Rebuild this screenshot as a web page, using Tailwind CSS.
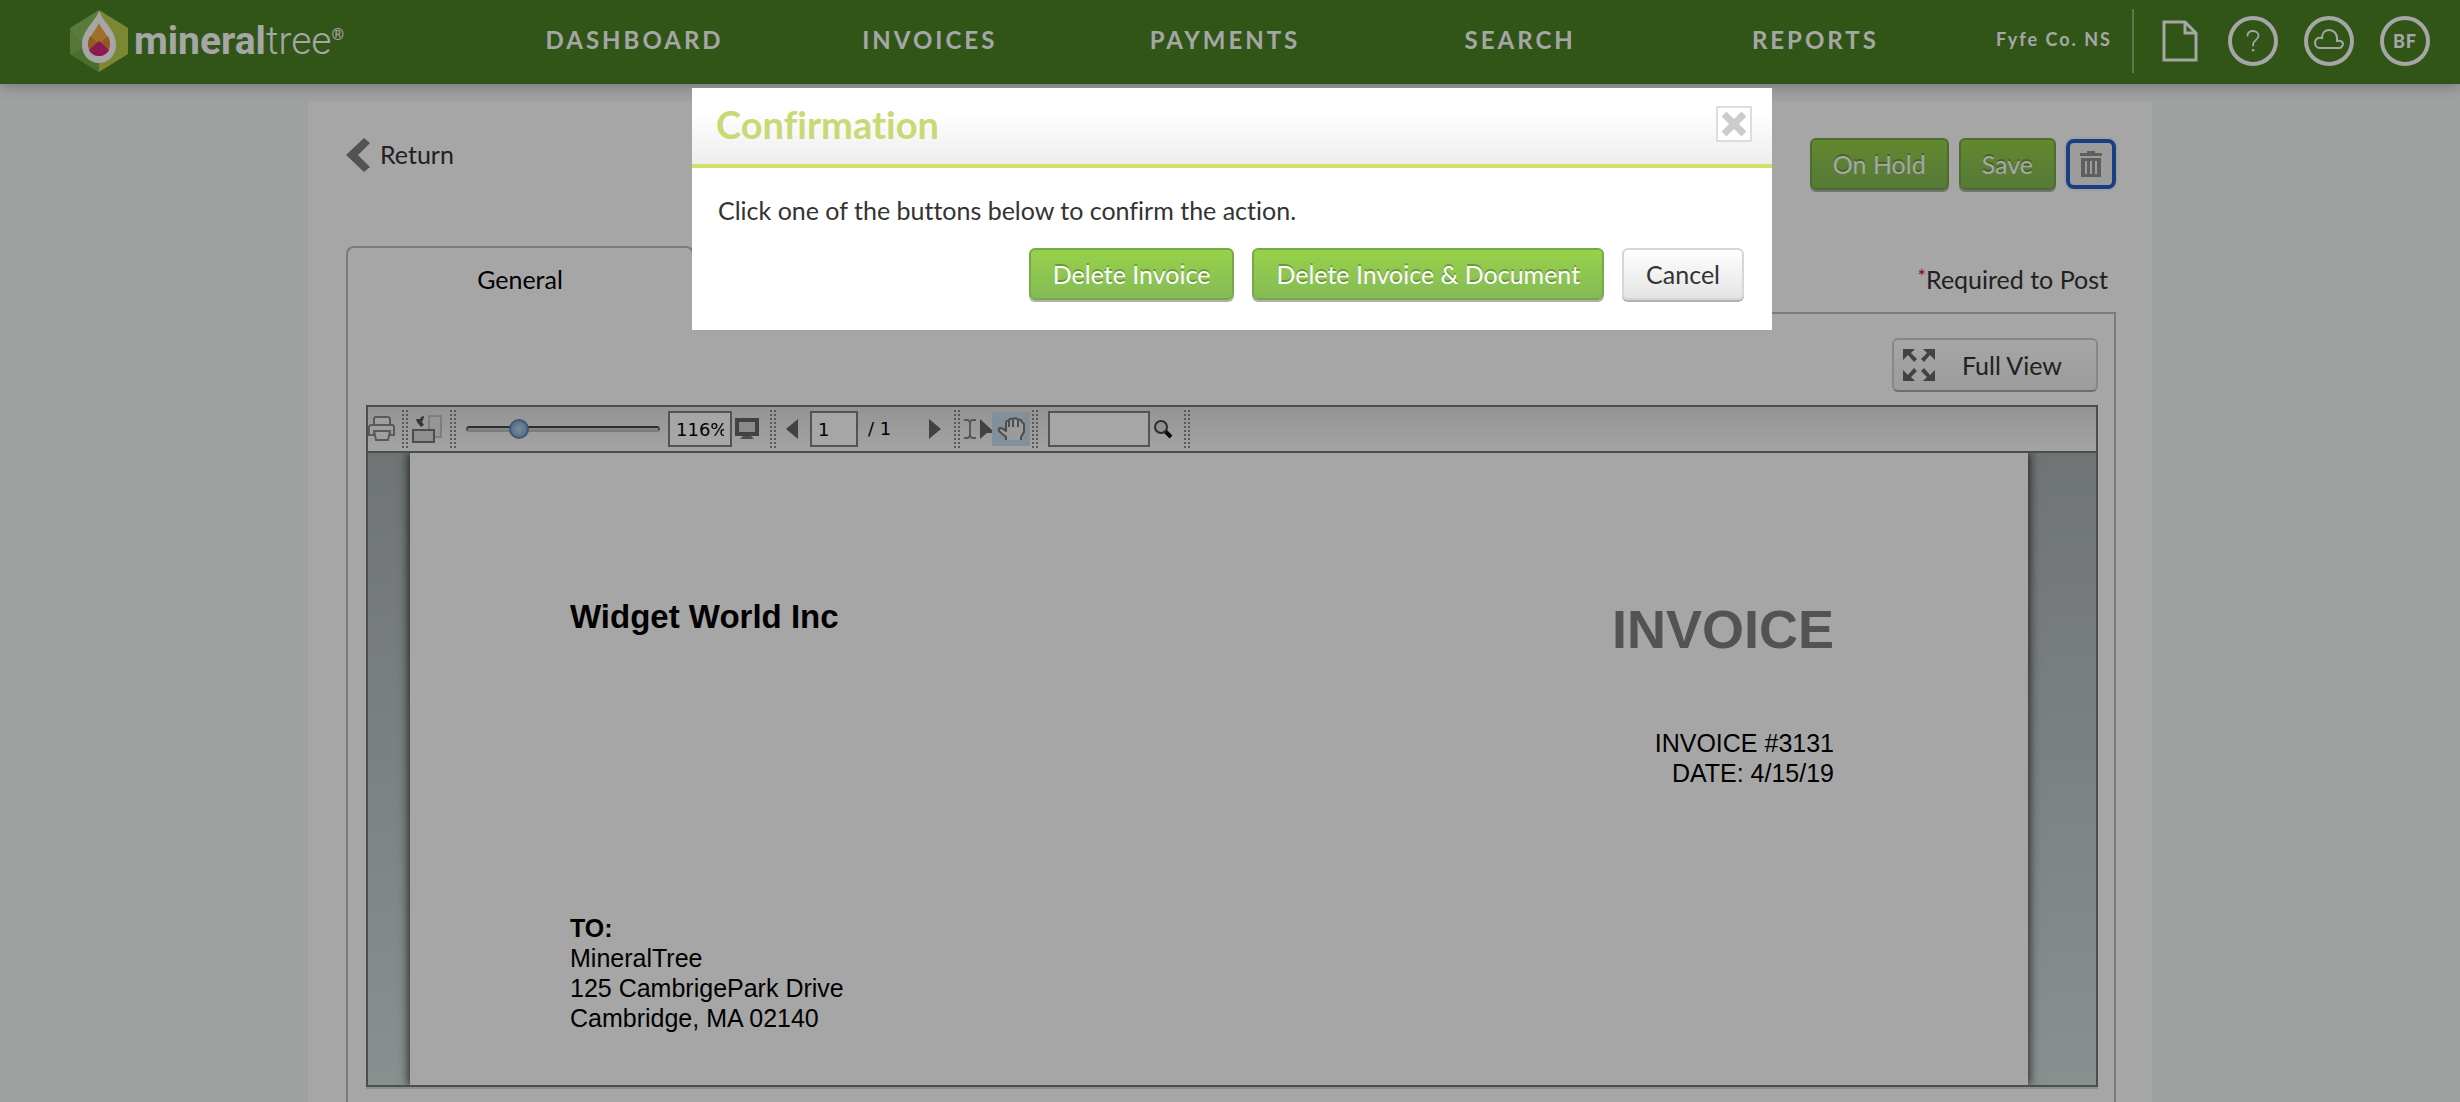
<!DOCTYPE html>
<html lang="en">
<head>
    <meta charset="UTF-8">
    <meta name="viewport" content="width=device-width, initial-scale=1.0">
    <script src="https://cdn.jsdelivr.net/npm/@tailwindcss/browser@4"></script>
    <title>MineralTree - Invoice</title>
</head>
<body class="flex flex-col min-h-screen bg-[#f2f7f5] font-[Lato,sans-serif] text-[25px] leading-8 text-[#333333] [font-variant-ligatures:none]">

<header class="relative z-10 flex items-center h-[84px] shrink-0 pr-[30px] pb-[2px] bg-[#4a8323] text-white shadow-[0_2px_12px_rgba(60,60,90,0.35)]">
    <a href="#" aria-label="mineraltree" class="flex items-center w-[487px] shrink-0 pl-[70px] gap-[6px] font-[Roboto,sans-serif] text-[39px] leading-[62px]">
        <svg class="w-[58px] h-[62px]" viewBox="0 0 58 62">
            <path d="M29 0L0 18v26l29 18z" fill="#8cbd5c"/>
            <path d="M29 0l29 18v26L29 62z" fill="#bfd04f"/>
            <path d="M0 44l29-14v32z" fill="#72aa46"/>
            <path d="M0 18v26l14-8z" fill="#84b656"/>
            <path d="M29 1C25 12 12 20 12 35c0 10 7 18 17 18s17-8 17-18C46 20 33 12 29 1z" fill="#fff"/>
            <path d="M29 13c-3 8-11 13-11 22 0 6 5 11 11 11s11-5 11-11c0-9-8-14-11-22z" fill="#f4ac3c"/>
            <path d="M20 26l9 8-7 7c-2-2-4-4-4-7 0-3 1-6 2-8zM38 26l-9 8 7 7c2-2 4-4 4-7 0-3-1-6-2-8z" fill="#e08a38"/>
            <path d="M29 31L19 40c2 4 6 6 10 6s8-2 10-6z" fill="#d6297f"/>
        </svg>
        <span><b>mineral</b><span class="font-light">tree</span><sup class="text-[16px] -top-[14px]">®</sup></span>
    </a>
    <nav class="grid grid-cols-5 flex-1 text-center text-2xl font-bold tracking-[3px] pb-[2px]">
        <a href="#">DASHBOARD</a>
        <a href="#">INVOICES</a>
        <a href="#">PAYMENTS</a>
        <a href="#">SEARCH</a>
        <a href="#">REPORTS</a>
    </nav>
    <div class="flex items-center justify-end w-[467px] shrink-0">
        <span class="text-[18px] font-bold tracking-[2px] pr-5 pb-1">Fyfe Co. NS</span>
        <span class="w-[2px] h-16 bg-white/40"></span>
        <button aria-label="Documents" class="ml-7 mr-[30px]">
            <svg class="w-[36px] h-[42px]" viewBox="0 0 36 42" fill="none" stroke="#fff" stroke-width="3">
                <path d="M2 2h21l11 11v27H2z"/>
                <path d="M23 2v11h11"/>
            </svg>
        </button>
        <div class="flex gap-[26px]">
            <button aria-label="Help" class="flex items-center justify-center size-[50px] rounded-full border-4">
                <svg class="size-[22px]" viewBox="0 0 24 24" fill="none" stroke="#fff" stroke-width="2" stroke-linecap="round">
                    <path d="M6 6c0-7 12-6 12 0 0 5-6 5-6 10v1"/>
                    <circle cx="12" cy="22" r="1" fill="#fff" stroke-width="1"/>
                </svg>
            </button>
            <button aria-label="Cloud" class="flex items-center justify-center size-[50px] rounded-full border-4">
                <svg class="w-[30px] h-[26px] mb-1" viewBox="0 0 30 26" fill="none" stroke="#fff" stroke-width="2">
                    <path d="M6 22a5 5 0 0 1-5-5c0-4 3-6 7-5 0-5 3-8 7-8 5 0 8 4 8 8v3c4-1 6 1 6 3s-2 4-4 4z"/>
                </svg>
            </button>
            <button class="size-[50px] rounded-full border-4 text-[18px] leading-none font-black tracking-[1px]">BF</button>
        </div>
    </div>
</header>

<main class="flex flex-col flex-1 w-full max-w-[1844px] mx-auto mt-[18px] pl-[38px] pr-9 bg-white">
    <div class="flex justify-between items-start pt-9">
        <a href="#" class="flex items-center gap-[10px]">
            <svg class="w-[24px] h-[34px]" viewBox="0 0 24 34"><path d="M18 0l6 5-12 12 12 12-6 5L0 17z" fill="#808080"/></svg>
            <span class="pb-[2px]">Return</span>
        </a>
        <div class="flex items-center gap-[10px]">
            <button class="h-[52px] px-[21px] rounded-md border-2 border-[#77a84a] bg-linear-to-b from-[#98d148] to-[#84bb56] text-white text-shadow-[0_-2px_0_rgba(0,0,0,0.25)] shadow-[0_2px_0_#b0b0b0]">On Hold</button>
            <button class="h-[52px] px-[21px] rounded-md border-2 border-[#77a84a] bg-linear-to-b from-[#98d148] to-[#84bb56] text-white text-shadow-[0_-2px_0_rgba(0,0,0,0.25)] shadow-[0_2px_0_#b0b0b0]">Save</button>
            <button aria-label="Delete" class="flex items-center justify-center size-[50px] rounded-lg border-4 border-[#2263c8] bg-[#f0f0f0] shadow-[0_0_0_2px_#f4f4f4]">
                <svg class="w-[24px] h-[26px]" viewBox="0 0 24 26" fill="#939393">
                    <path d="M8 0h8v2h7v3H1V2h7z"/>
                    <path d="M2 7h20v19H2zM6 10v13h2V10zM11 10v13h2V10zM16 10v13h2V10z" fill-rule="evenodd"/>
                </svg>
            </button>
        </div>
    </div>

    <div class="flex justify-between mt-14">
        <button class="w-[348px] h-[68px] -mb-[2px] pb-1 relative rounded-t-lg border-2 border-b-0 border-[#bdbdbd] bg-white text-black">General</button>
        <span class="flex self-center pr-2"><span class="text-xl leading-6 text-red-600">*</span>Required to Post</span>
    </div>

    <section class="flex-1 border-2 border-b-0 border-[#bdbdbd] pl-[18px] pr-4 pt-6">
        <div class="flex justify-end">
            <button class="flex items-center gap-[26px] h-[54px] pl-2 pr-[34px] rounded-md border-2 border-[#d0d0d0] border-b-[#aaaaaa] bg-linear-to-b from-white to-[#f0f0f0]">
                <svg class="w-[34px] h-[34px]" viewBox="0 0 34 34" fill="#666">
                    <path d="M1 1h12L9 5l6 6-3 3-6-7-5 5zM33 1H21l4 4-6 6 3 3 6-7 5 5zM1 33h12l-4-4 6-6-3-3-6 7-5-5zM33 33H21l4-4-6-6 3-3 6 7 5-5z"/>
                </svg>
                Full View
            </button>
        </div>

        <div class="mt-[13px] border-2 border-[#777777] shadow-[0_2px_0_#d3dddd]">
            <!-- viewer toolbar -->
            <div class="flex items-center h-[46px] border-b-2 border-[#777777] bg-linear-to-b from-[#e3e3e3] to-[#fcfcfc] font-['DejaVu_Sans',sans-serif] text-[18px] text-black">
                <button aria-label="Print">
                    <svg class="w-[28px] h-[26px]" viewBox="0 0 28 26" fill="#f4f4f4" stroke="#8a8a8a" stroke-width="2">
                        <path d="M6 9V3q0-2 2-2h11q3 0 3 2v6"/>
                        <path d="M4 9h20q2 0 2 2v8h-4v-4H6v4H1v-8q0-2 3-2z"/>
                        <path d="M6 15h16l-2 9H8z"/>
                    </svg>
                </button>
                <span class="w-[6px] h-[38px] ml-[6px] border-x-2 border-dotted border-[#8a8a8a]"></span>
                <button aria-label="Rotate" class="ml-1">
                    <svg class="w-[30px] h-[30px]" viewBox="0 0 30 30">
                        <path d="M17 2h12v21H17z" fill="#e6e6e6" stroke="#c2c2c2" stroke-width="2"/>
                        <path d="M1 16h21v12H1z" fill="#dcdcdc" stroke="#777" stroke-width="2"/>
                        <path d="M12 2q-3 0-4 3H4l1 3 4 5 3-2-2-3q2-3 2-6z" fill="#555"/>
                    </svg>
                </button>
                <span class="w-[6px] h-[38px] ml-2 border-x-2 border-dotted border-[#8a8a8a]"></span>
                <input type="range" aria-label="Zoom" min="0" max="100" value="24" class="w-[194px] h-[6px] ml-[10px] appearance-none rounded-full border-2 border-t-[#444444] border-x-[#777777] border-b-[#b5c2bd] bg-[#cccccc] [&::-webkit-slider-thumb]:appearance-none [&::-webkit-slider-thumb]:size-5 [&::-webkit-slider-thumb]:rounded-full [&::-webkit-slider-thumb]:border-2 [&::-webkit-slider-thumb]:border-[#6684b8] [&::-webkit-slider-thumb]:bg-radial [&::-webkit-slider-thumb]:from-[#b9d8f2] [&::-webkit-slider-thumb]:to-[#6f9dcc]">
                <input type="text" aria-label="Zoom level" value="116%" class="w-16 h-9 ml-2 px-[6px] border-2 border-[#808080] bg-white">
                <button aria-label="Fit to screen" class="ml-[3px]">
                    <svg class="w-[24px] h-[22px]" viewBox="0 0 24 22">
                        <path d="M2 2h20v14H2z" fill="#d4d4d4" stroke="#666" stroke-width="4"/>
                        <path d="M8 18h8l3 3H5z" fill="#777"/>
                    </svg>
                </button>
                <span class="w-[6px] h-[38px] ml-[11px] border-x-2 border-dotted border-[#8a8a8a]"></span>
                <button aria-label="Previous page" class="ml-[10px]">
                    <svg class="w-[12px] h-[20px]" viewBox="0 0 12 20"><path d="M12 0v20L0 10z" fill="#666"/></svg>
                </button>
                <input type="text" aria-label="Page" value="1" class="w-12 h-9 ml-3 px-[6px] border-2 border-[#808080] bg-white">
                <span class="w-[71px] pl-[10px]">/ 1</span>
                <button aria-label="Next page">
                    <svg class="w-[12px] h-[20px]" viewBox="0 0 12 20"><path d="M0 0v20l12-10z" fill="#666"/></svg>
                </button>
                <span class="w-[6px] h-[38px] ml-[13px] border-x-2 border-dotted border-[#8a8a8a]"></span>
                <button aria-label="Select text" class="ml-1">
                    <svg class="w-[28px] h-[22px]" viewBox="0 0 28 22">
                        <path d="M0 2h4l2 2 2-2h4M0 20h4l2-2 2 2h4M6 4v14" fill="none" stroke="#888" stroke-width="2"/>
                        <path d="M16 1l12 11v3h-5l-7 6z" fill="#666"/>
                    </svg>
                </button>
                <button aria-label="Pan" class="flex items-center justify-center w-[38px] h-[34px] bg-[#c9dded]">
                    <svg class="w-[28px] h-[24px]" viewBox="0 0 28 24" fill="#eee" stroke="#777" stroke-width="2" stroke-linejoin="round">
                        <path d="M9 23v-3l-6-5q-3-3 0-4 3 0 6 3V6q0-3 3-2 0-3 4-2 3-2 5 1 3-1 4 2l2 2v8l-3 5v3"/>
                        <path d="M12 4v6M16 3v7M21 4v6" fill="none"/>
                    </svg>
                </button>
                <span class="w-[6px] h-[38px] ml-[2px] border-x-2 border-dotted border-[#8a8a8a]"></span>
                <input type="text" aria-label="Find" class="w-[102px] h-9 ml-[10px] px-[6px] border-2 border-[#808080] bg-white">
                <button aria-label="Search" class="ml-[3px]">
                    <svg class="size-[20px]" viewBox="0 0 20 20" fill="none">
                        <path d="M11 11l7 7" stroke="#111" stroke-width="4"/>
                        <circle cx="8" cy="8" r="6" fill="#ddd" stroke="#444" stroke-width="2"/>
                    </svg>
                </button>
                <span class="w-[6px] h-[38px] ml-[11px] border-x-2 border-dotted border-[#8a8a8a]"></span>
            </div>

            <!-- document page -->
            <div class="pl-[42px] pr-[68px] overflow-hidden bg-linear-to-b from-[#abb2b2] to-[#d3dddd]">
                <article class="bg-white shadow-[0_0_10px_1px_rgba(0,0,0,0.8)] pl-40 pr-[194px] pt-[145px] pb-[52px] font-['Liberation_Sans',sans-serif] text-[25px] leading-[30px] text-black">
                    <div class="flex justify-between items-start">
                        <h2 class="text-[33px] leading-[38px] font-bold">Widget World Inc</h2>
                        <div class="text-right">
                            <h1 class="text-[54px] leading-[62px] font-bold text-[#808080]">INVOICE</h1>
                            <p class="mt-[68px]">INVOICE #3131</p>
                            <p>DATE: 4/15/19</p>
                        </div>
                    </div>
                    <address class="mt-[125px] not-italic">
                        <b>TO:</b><br>
                        MineralTree<br>
                        125 CambrigePark Drive<br>
                        Cambridge, MA 02140
                    </address>
                </article>
            </div>
        </div>
    </section>
</main>

<div class="fixed inset-0 z-20 bg-black/35 pt-[88px] pl-1">
    <div role="dialog" aria-labelledby="dialogTitle" class="w-full max-w-[1080px] mx-auto bg-white">
        <div class="flex items-center justify-between h-20 pl-6 pr-5 pb-1 border-b-4 border-[#d3df67] bg-linear-to-b from-white from-30% to-[#eeeeee]">
            <h2 id="dialogTitle" class="text-[38px] leading-10 font-bold text-[#c8d975]">Confirmation</h2>
            <button aria-label="Close" class="flex items-center justify-center size-9 border-2 border-[#dddddd] bg-white">
                <svg class="size-[26px]" viewBox="0 0 26 26" fill="none" stroke="#ccc" stroke-width="7"><path d="M3 3l20 20M23 3L3 23"/></svg>
            </button>
        </div>
        <p class="px-[26px] pt-[26px]">Click one of the buttons below to confirm the action.</p>
        <div class="flex justify-end gap-[18px] pt-[22px] pr-7 pb-[30px]">
            <button class="h-[52px] px-[22px] rounded-md border-2 border-[#77a84a] bg-linear-to-b from-[#98d148] to-[#84bb56] text-white text-shadow-[0_-2px_0_rgba(0,0,0,0.25)] shadow-[0_2px_0_#b0b0b0]">Delete Invoice</button>
            <button class="h-[52px] px-[22px] rounded-md border-2 border-[#77a84a] bg-linear-to-b from-[#98d148] to-[#84bb56] text-white text-shadow-[0_-2px_0_rgba(0,0,0,0.25)] shadow-[0_2px_0_#b0b0b0]">Delete Invoice &amp; Document</button>
            <button class="h-[52px] px-[22px] rounded-md border-2 border-[#d6d6d6] bg-linear-to-b from-white to-[#e4e4e4] shadow-[0_2px_0_#b0b0b0]">Cancel</button>
        </div>
    </div>
</div>

</body>
</html>
